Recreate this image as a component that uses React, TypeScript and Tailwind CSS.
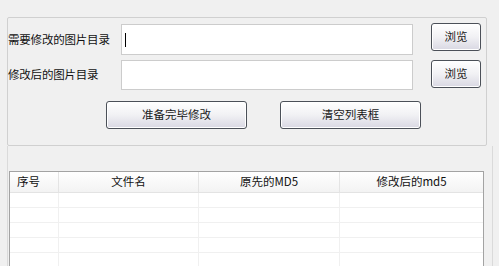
export default function App() {
  const font = "font-['SimSun','Noto_Sans_CJK_SC','Liberation_Sans',sans-serif]";
  const btn =
    'flex items-center justify-center rounded-[3px] border border-[#4b5058] bg-gradient-to-b from-white via-[#f1f1f4] to-[#d9d8e3] shadow-[inset_0_0_0_1px_#ffffff] text-[11.5px] text-[#1a1a1a]';
  const rows = [0, 1, 2, 3, 4];

  return (
    <div className={`w-[499px] h-[266px] overflow-hidden bg-[#f0f0f0] pt-[17px] text-[#111] ${font}`}>
      {/* Directory group box */}
      <div className="ml-[7px] w-[480px] h-[129px] rounded-[2px] border border-[#d0d0d0]">
        <div className="flex items-start mt-[5px]">
          <div className="w-[113px] h-[31px] mt-px flex items-center text-[11.5px] tracking-[-0.2px]">需要修改的图片目录</div>
          <div className="w-[292px] h-[31px] mt-px border border-[#cccccc] bg-white flex items-center pl-[3px]">
            <div className="w-px h-[14px] bg-black" />
          </div>
          <button className={`${btn} ml-[18px] w-[50px] h-[28px]`}>浏览</button>
        </div>
        <div className="flex items-start mt-[5px]">
          <div className="w-[113px] h-[30px] flex items-center text-[11.5px] tracking-[-0.2px]">修改后的图片目录</div>
          <div className="w-[292px] h-[30px] border border-[#cccccc] bg-white" />
          <button className={`${btn} ml-[18px] w-[50px] h-[28px]`}>浏览</button>
        </div>
        <div className="flex mt-[11px] ml-[98px] gap-[33px]">
          <button className={`${btn} w-[141px] h-[28px]`}>准备完毕修改</button>
          <button className={`${btn} w-[141px] h-[28px]`}>清空列表框</button>
        </div>
      </div>

      {/* List panel */}
      <div className="ml-[7px] w-[486px] h-[121px] border-l border-r border-[#dadada] pt-[25px]">
        <div className="ml-px w-[475px] border border-[#a3a3a3] border-b-0 bg-white h-[100px] overflow-hidden">
          <div className="grid grid-cols-[49px_140px_141px_1fr] h-[21px] bg-gradient-to-b from-white to-[#f3f3f3] border-b border-[#e3e3e3] text-[11.5px]">
            <div className="flex items-center pl-[7px] border-r border-[#e4e4e4]">序号</div>
            <div className="flex items-center justify-center border-r border-[#e4e4e4]">文件名</div>
            <div className="flex items-center justify-center border-r border-[#e4e4e4]">原先的MD5</div>
            <div className="flex items-center justify-center">修改后的md5</div>
          </div>
          {rows.map((r) => (
            <div key={r} className="grid grid-cols-[49px_140px_141px_1fr] h-[15px] border-b border-[#f0f0f0]">
              <div className="border-r border-[#f0f0f0]" />
              <div className="border-r border-[#f0f0f0]" />
              <div className="border-r border-[#f0f0f0]" />
              <div />
            </div>
          ))}
        </div>
      </div>
    </div>
  );
}
